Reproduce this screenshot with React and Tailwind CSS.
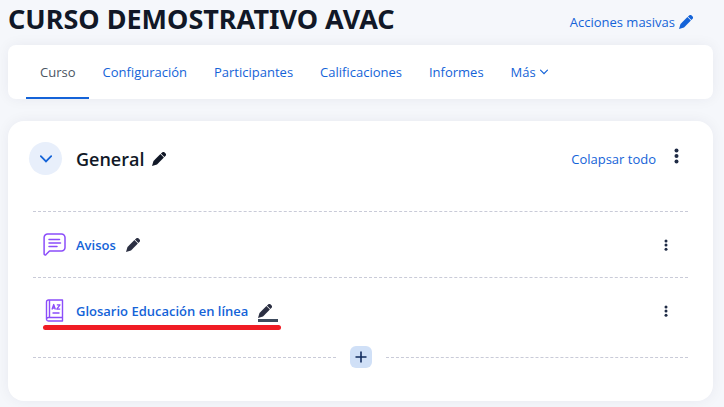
import { useState } from "react";

const TABS = ["Curso", "Configuración", "Participantes", "Calificaciones", "Informes"];

const ACTIVITIES = [
  { id: "avisos", name: "Avisos", icon: "forum" },
  { id: "glosario", name: "Glosario Educación en línea", icon: "glossary", marked: true },
];

const App = () => {
  const [active, setActive] = useState("Curso");

  return (
    <div className="min-h-screen bg-[#f5f7fb] pl-2 pr-[11px] pb-1.5 font-['Open_Sans','Noto_Sans',sans-serif] text-[13px] leading-5 text-[#1463d8]">
      <header className="flex items-center justify-between pr-5 pb-[7px]">
        <h1 className="font-['Noto_Sans','Open_Sans',sans-serif] text-[27px] leading-[38px] font-bold text-[#111827]">
          CURSO DEMOSTRATIVO AVAC
        </h1>
        <button type="button" className="flex items-center gap-1 pt-1.5">
          Acciones masivas <Pencil className="h-3.5 w-3.5" />
        </button>
      </header>

      <nav className="flex rounded-lg bg-white px-[18px] shadow-[0_0_14px_rgba(20,30,60,0.06)]">
        {TABS.map((tab) => (
          <a
            key={tab}
            href="#"
            onClick={() => setActive(tab)}
            className={
              active === tab
                ? "border-b-2 border-[#1463d8] pt-[17px] pr-[13px] pb-[15px] pl-3.5 text-[#4b5563]"
                : "border-b-2 border-transparent pt-[17px] pr-[13px] pb-[15px] pl-3.5"
            }
          >
            {tab}
          </a>
        ))}
        <button type="button" className="flex items-center gap-1 pt-[17px] pr-[13px] pb-[17px] pl-3.5">
          Más
          <Chevron className="h-1.5 w-2" />
        </button>
      </nav>

      <section className="mt-[22px] rounded-2xl bg-white pt-[21px] pb-[33px] shadow-[0_0_14px_rgba(20,30,60,0.06)]">
        <div className="flex items-center pl-[21px] pr-[34px]">
          <button
            type="button"
            aria-label="Colapsar General"
            className="flex h-[33px] w-[33px] items-center justify-center rounded-full bg-[#e8effb]"
          >
            <Chevron className="h-2 w-3" />
          </button>
          <h2 className="ml-3.5 text-lg leading-6 font-semibold text-[#111827]">General</h2>
          <button type="button" aria-label="Editar nombre" className="ml-2 text-[#111827]">
            <Pencil className="h-3.5 w-3.5" />
          </button>
          <a href="#" className="ml-auto">
            Colapsar todo
          </a>
          <button type="button" aria-label="Editar sección" className="ml-[18px] pb-1.5">
            <Dots className="h-4 w-[5px]" />
          </button>
        </div>

        <ul className="mx-[25px] mt-9">
          {ACTIVITIES.map((item) => (
            <li
              key={item.id}
              className="relative flex h-[66px] items-center border-t border-dashed border-[#c9cbd8] pl-2.5 pr-5"
            >
              <span className="flex w-[23px] justify-center">
                {item.icon === "forum" ? <ForumIcon /> : <GlossaryIcon />}
              </span>
              <a href="#" className="ml-2.5 font-semibold">
                {item.name}
              </a>
              <button
                type="button"
                aria-label={`Editar ${item.name}`}
                className="relative ml-2.5 flex w-5 text-[#2b2f42]"
              >
                <Pencil className="h-3.5 w-3.5" />
                {item.marked && <span className="absolute -bottom-1 left-0 h-[3px] w-full bg-[#3d4a5c]" />}
              </button>
              <button type="button" aria-label={`Opciones de ${item.name}`} className="ml-auto">
                <Dots className="h-3 w-1" />
              </button>
              {item.marked && (
                <span className="absolute bottom-[13px] left-2.5 h-[5px] w-[238px] rounded-full bg-[#f01c24]" />
              )}
            </li>
          ))}
        </ul>

        <div className="mx-[25px] mt-[3px] flex items-center">
          <span className="grow border-t border-dashed border-[#c9cbd8]" />
          <button
            type="button"
            aria-label="Añadir actividad"
            className="mx-3.5 flex h-[22px] w-[22px] items-center justify-center rounded-md bg-[#d0e0f7]"
          >
            <svg viewBox="0 0 12 12" className="h-3 w-3" stroke="#0f2a5c" strokeWidth="1.6">
              <path d="M6 0.5v11M0.5 6h11" />
            </svg>
          </button>
          <span className="grow border-t border-dashed border-[#c9cbd8]" />
        </div>
      </section>
    </div>
  );
};

const Pencil = ({ className }) => (
  <svg viewBox="0 0 14 14" className={className} fill="currentColor">
    <path d="M8.4 2.1 11.9 5.600 5 12.500 0 14 1.500 9z" />
    <path d="M8.900 1.600 10.200.4a1.700 1.700 0 0 1 2.400 0l1 1a1.700 1.700 0 0 1 0 2.400L12.400 5.100z" />
  </svg>
);

const Chevron = ({ className }) => (
  <svg viewBox="0 0 12 8" className={className} fill="none" stroke="currentColor" strokeWidth="1.8">
    <path d="M0.8 1.2 6 6.4l5.200-5.200" strokeLinecap="round" />
  </svg>
);

const Dots = ({ className }) => (
  <svg viewBox="0 0 5 16" className={className} fill="#1f2b45">
    <circle cx="2.500" cy="2.500" r="2" />
    <circle cx="2.500" cy="8" r="2" />
    <circle cx="2.500" cy="13.500" r="2" />
  </svg>
);

const ForumIcon = () => (
  <svg width="23" height="23" viewBox="0 0 23 23" fill="none" stroke="#8b4dfa" strokeWidth="1.500" strokeLinecap="round" strokeLinejoin="round">
    <path d="M5 1h13.500a3.500 3.500 0 0 1 3.500 3.500v10a3.500 3.500 0 0 1-3.500 3.500H6.500L3 21.600c-.8.7-1.900.4-1.900-.8V4.500A3.500 3.500 0 0 1 5 1z" />
    <path d="M6 6.500h10.500M6 10h11.500M6 13.500h8" />
  </svg>
);

const GlossaryIcon = () => (
  <svg width="19" height="23" viewBox="0 0 19 23" fill="none" stroke="#8b4dfa" strokeWidth="1.400" strokeLinejoin="round">
    <path d="M3.500 1H17.500v17.500H3.500A2 2 0 0 0 1.500 20.200V3A2 2 0 0 1 3.500 1zM4.500 1v17.500M1.500 20.200a2 2 0 0 0 2 1.800h14v-3.500" />
    <path d="M7 10.500 8.700 5.500l1.700 5M7.600 9h2.200M11.800 5.800h3.200l-3.200 4.400h3.400M7.500 14h7" strokeWidth="1.300" />
  </svg>
);

export default App;
